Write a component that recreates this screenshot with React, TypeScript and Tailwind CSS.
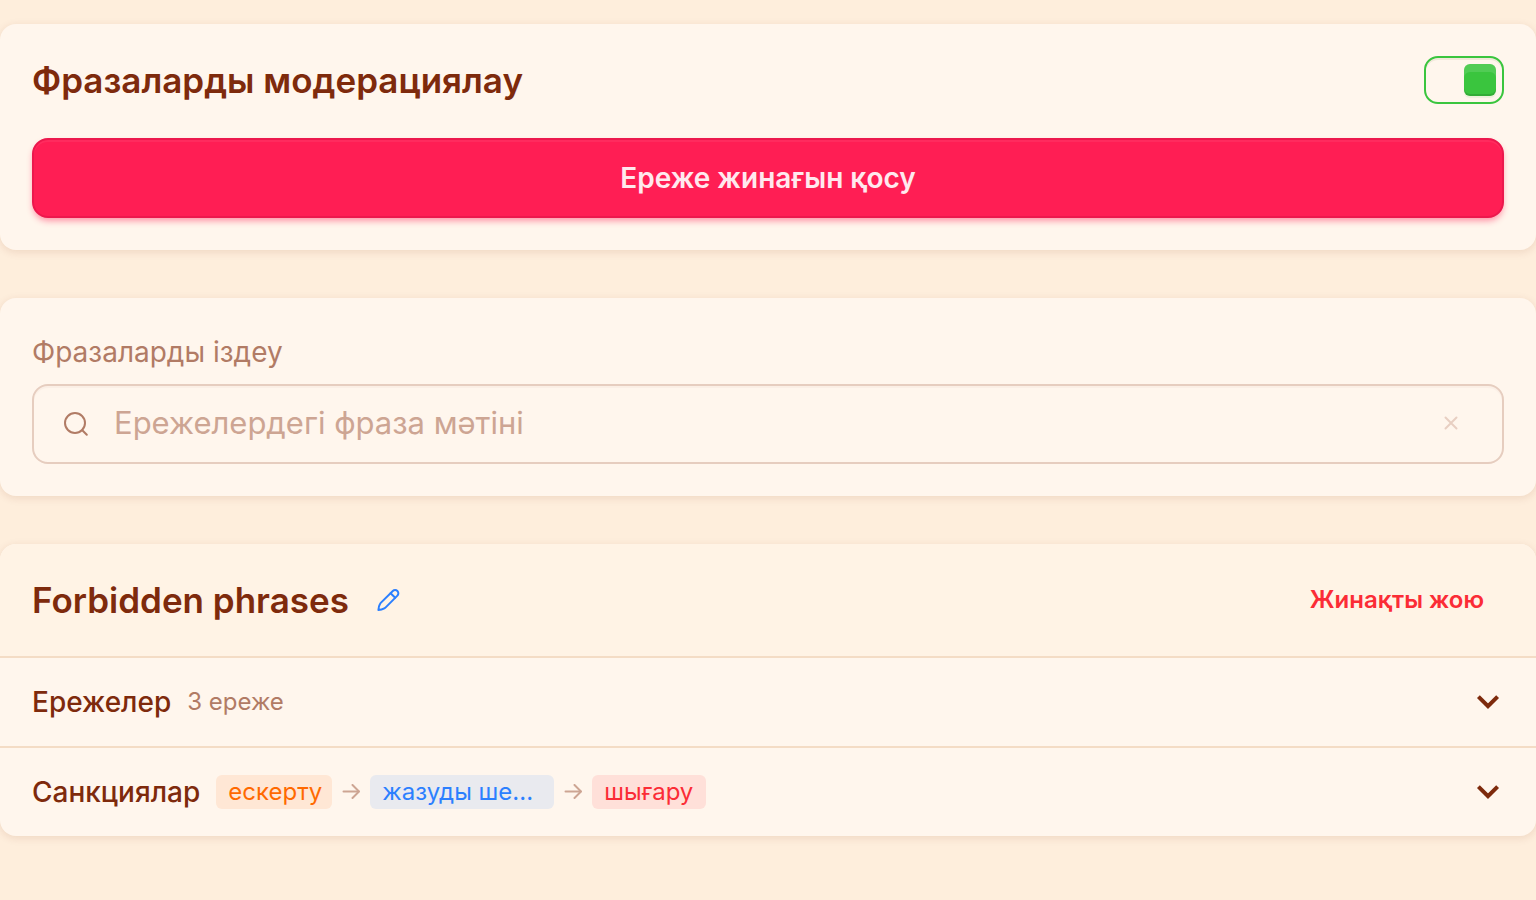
import { useState } from "react";

const Pencil = () => (
  <svg width="24" height="24" viewBox="0 0 24 24" fill="none" stroke="currentColor" strokeWidth="2" strokeLinecap="round" strokeLinejoin="round" aria-hidden="true">
    <path d="M1.4 22c.1-2.3.5-4.2 1.6-6 .4-.7.9-1.3 1.5-1.9L15.8 3a3.2 3.2 0 0 1 4.6 4.6L9.2 18.9c-.6.6-1.2 1.1-1.9 1.5-1.8 1-3.7 1.5-5.9 1.6Z" />
    <path d="m13.6 5.2 4.6 4.6" />
  </svg>
);

const ArrowRight = () => (
  <svg width="18" height="16" viewBox="0 0 18 16" fill="none" stroke="currentColor" strokeWidth="2" strokeLinecap="round" aria-hidden="true">
    <path d="M1.5 7.5h15" />
    <path d="m10.5 1 6.5 6.5-6.5 6.5" strokeLinejoin="round" />
  </svg>
);

const ChevronDown = () => (
  <svg width="32" height="32" viewBox="0 0 32 32" fill="none" stroke="currentColor" strokeWidth="4" aria-hidden="true">
    <path d="M6.4 10.6 16 20.2l9.6-9.6" />
  </svg>
);

const sanctions = [
  { label: "ескерту", className: "w-[116px] bg-[#ffe7d5] text-orange-500" },
  { label: "жазуды ше...", className: "w-[184px] bg-[#e9eaef] text-blue-500" },
  { label: "шығару", className: "w-[114px] bg-[#ffe0d9] text-red-500" },
];

const App = () => {
  const [enabled, setEnabled] = useState(true);
  const [query, setQuery] = useState("");

  return (
    <main className="min-h-screen bg-[#feeedc] py-6 flex flex-col gap-12 font-['Inter','Noto_Sans',sans-serif] text-orange-900">

      {/* Moderation switch */}
      <section className="rounded-2xl bg-[#fff6ed] p-8 shadow-[0_2px_8px_rgba(126,42,12,.12)]">
        <div className="flex items-center justify-between">
          <h1 className="text-[35px] leading-[46px] font-semibold">
            <label htmlFor="moderation">Фразаларды модерациялау</label>
          </h1>
          <input
            id="moderation"
            type="checkbox"
            role="switch"
            checked={enabled}
            onChange={(e) => setEnabled(e.target.checked)}
            className="appearance-none w-20 h-12 p-1.5 rounded-[14px] border-2 border-[#3ac53e] shadow-[inset_0_2px_0_rgba(80,80,0,.08)] before:block before:size-8 before:rounded-md before:bg-[#3ac53e] before:shadow-[inset_0_8px_0_rgba(255,255,255,.12),inset_0_-2px_0_rgba(0,0,0,.12),0_2px_1px_rgba(58,197,62,.1)] checked:before:translate-x-8"
          />
        </div>

        <button
          type="button"
          className="mt-[34px] w-full h-20 rounded-2xl border-2 border-[#ec184d] bg-[#ff1e54] text-[28px] font-semibold text-[#ffe9ee] shadow-[inset_0_2px_0_rgba(255,255,255,.06),0_4px_6px_-1px_rgba(255,30,84,.45)]"
        >
          Ереже жинағын қосу
        </button>
      </section>

      {/* Phrase search */}
      <section className="rounded-2xl bg-[#fff6ed] p-8 shadow-[0_2px_8px_rgba(126,42,12,.12)]">
        <label htmlFor="search" className="block mb-2.5 text-[28px] leading-[44px] text-[#b17b65]">
          Фразаларды іздеу
        </label>
        <div className="flex items-center h-20 pl-7 pr-8 rounded-2xl border-2 border-[#e6cdbf] shadow-[inset_0_2px_1px_rgba(126,42,12,.03)]">
          <svg width="28" height="28" viewBox="0 0 28 28" fill="none" stroke="#b17b65" strokeWidth="2" strokeLinecap="round" className="shrink-0" aria-hidden="true">
            <circle cx="13" cy="13" r="10" />
            <path d="m20.3 20.3 4.5 4.5" />
          </svg>
          <input
            id="search"
            type="text"
            value={query}
            onChange={(e) => setQuery(e.target.value)}
            placeholder="Ережелердегі фраза мәтіні"
            className="flex-1 min-w-0 h-full px-6 pb-1 bg-transparent text-[31px] outline-none placeholder:text-[#cda593]"
          />
          <button type="button" aria-label="Тазалау" onClick={() => setQuery("")} className="p-2 text-[#e8cfc2]">
            <svg width="20" height="20" viewBox="0 0 20 20" fill="none" stroke="currentColor" strokeWidth="2" strokeLinecap="round">
              <path d="m3.5 3.5 11 11M14.5 3.5l-11 11" />
            </svg>
          </button>
        </div>
      </section>

      {/* Rule set */}
      <section className="rounded-2xl bg-[#fff6ed] overflow-hidden shadow-[0_2px_8px_rgba(126,42,12,.12)]">
        <div className="flex items-center justify-between h-28 px-8 bg-[#fff3e5]">
          <div className="flex items-center gap-7">
            <h2 className="text-[35px] leading-[46px] font-semibold">Forbidden phrases</h2>
            <button type="button" aria-label="Атын өзгерту" className="text-blue-500">
              <Pencil />
            </button>
          </div>
          <button type="button" className="px-5 text-[24px] font-semibold text-red-500">
            Жинақты жою
          </button>
        </div>

        <button type="button" className="flex items-center justify-between w-full h-[90px] px-8 border-t-2 border-[#f4dcc5]">
          <span className="flex items-center gap-4">
            <span className="text-[28px] font-medium">Ережелер</span>
            <span className="text-[24px] text-[#b17b65]">3 ереже</span>
          </span>
          <ChevronDown />
        </button>

        <button type="button" className="flex items-center justify-between w-full h-[90px] px-8 border-t-2 border-[#f4dcc5]">
          <span className="flex items-center gap-4">
            <span className="text-[28px] font-medium">Санкциялар</span>
            <span className="flex items-center gap-2.5">
              {sanctions.map((s, i) => (
                <span key={s.label} className="flex items-center gap-2.5">
                  {i > 0 && <span className="text-[#cda593]"><ArrowRight /></span>}
                  <span className={`px-3 rounded-md text-left text-[24px] leading-[34px] whitespace-nowrap ${s.className}`}>
                    {s.label}
                  </span>
                </span>
              ))}
            </span>
          </span>
          <ChevronDown />
        </button>
      </section>
    </main>
  );
};

export default App;
